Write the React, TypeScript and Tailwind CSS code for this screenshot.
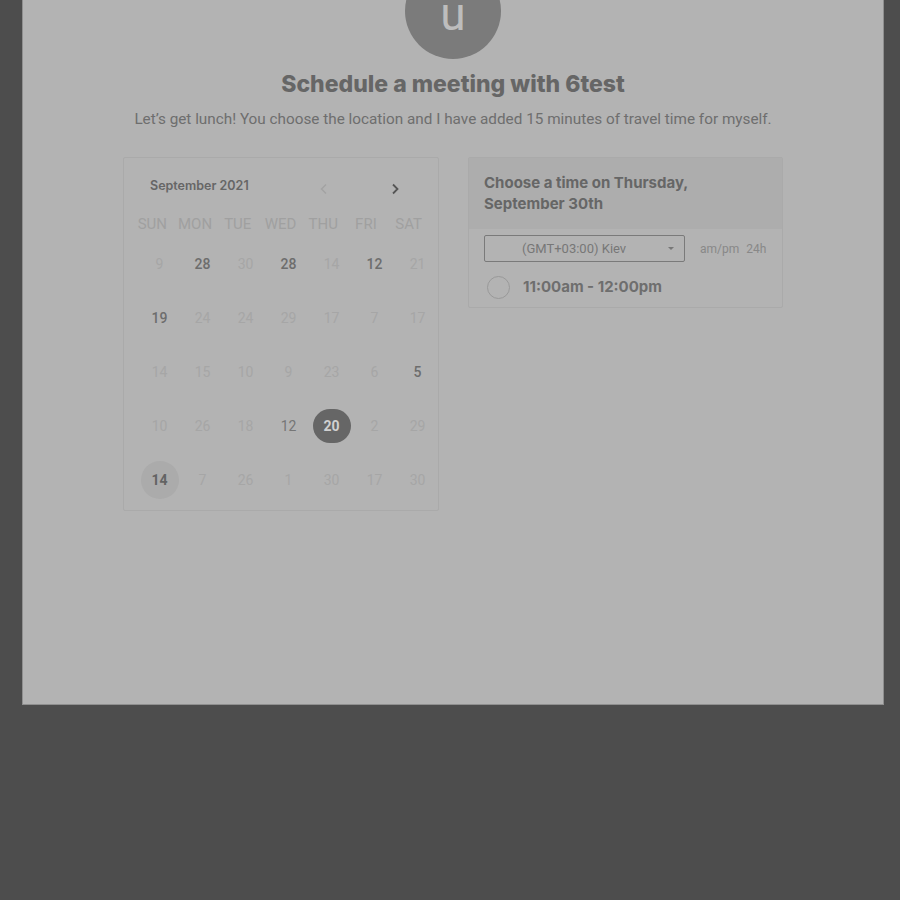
import React from "react";

type Day = { n: number; kind: "light" | "dark" | "mid" | "selected" | "today" };

const rows: Day[][] = [
  [
    { n: 9, kind: "light" },
    { n: 28, kind: "dark" },
    { n: 30, kind: "light" },
    { n: 28, kind: "dark" },
    { n: 14, kind: "light" },
    { n: 12, kind: "dark" },
    { n: 21, kind: "light" },
  ],
  [
    { n: 19, kind: "dark" },
    { n: 24, kind: "light" },
    { n: 24, kind: "light" },
    { n: 29, kind: "light" },
    { n: 17, kind: "light" },
    { n: 7, kind: "light" },
    { n: 17, kind: "light" },
  ],
  [
    { n: 14, kind: "light" },
    { n: 15, kind: "light" },
    { n: 10, kind: "light" },
    { n: 9, kind: "light" },
    { n: 23, kind: "light" },
    { n: 6, kind: "light" },
    { n: 5, kind: "dark" },
  ],
  [
    { n: 10, kind: "light" },
    { n: 26, kind: "light" },
    { n: 18, kind: "light" },
    { n: 12, kind: "mid" },
    { n: 20, kind: "selected" },
    { n: 2, kind: "light" },
    { n: 29, kind: "light" },
  ],
  [
    { n: 14, kind: "today" },
    { n: 7, kind: "light" },
    { n: 26, kind: "light" },
    { n: 1, kind: "light" },
    { n: 30, kind: "light" },
    { n: 17, kind: "light" },
    { n: 30, kind: "light" },
  ],
];

const week = ["SUN", "MON", "TUE", "WED", "THU", "FRI", "SAT"];

function DayCell({ d }: { d: Day }) {
  let inner = "text-[#a6a6a6]";
  if (d.kind === "dark") inner = "text-[#6d6d6d] font-medium";
  if (d.kind === "mid") inner = "text-[#767676]";
  if (d.kind === "selected")
    inner = "bg-[#666666] text-[#d0d0d0] font-bold rounded-full w-[38px] h-[34px]";
  if (d.kind === "today")
    inner = "bg-[#ababab] text-[#636363] font-bold rounded-full w-[38px] h-[38px]";
  return (
    <div className="h-[54px] flex items-center justify-center">
      <div className={`flex items-center justify-center text-[14px] ${inner}`}>{d.n}</div>
    </div>
  );
}

export default function App() {
  return (
    <div
      className="w-[900px] h-[900px] bg-[#4d4d4d] overflow-hidden"
      style={{ fontFamily: "Roboto, 'Liberation Sans', sans-serif" }}
    >
      <div className="ml-[22px] w-[862px] h-[705px] bg-[#b3b3b3] border-l border-r border-b border-[#8f8f8f] relative">
        <div className="absolute left-[382px] top-[-37px] w-[96px] h-[96px] rounded-full bg-[#7b7b7b] flex items-end justify-center pb-[31px]">
          <span className="text-[#bdbdbd] text-[46px] leading-[28px]" style={{ fontFamily: "Roboto, sans-serif" }}>u</span>
        </div>
        <div className="pt-[70px] flex flex-col items-center">
          <h1
            className="text-[23px] font-extrabold text-[#666666] leading-[28px]"
            style={{ fontFamily: "Inter, 'Liberation Sans', sans-serif" }}
          >
            Schedule a meeting with 6test
          </h1>
          <p className="mt-[12px] text-[15.3px] text-[#6e6e6e] leading-[18px]">
            Let’s get lunch! You choose the location and I have added 15 minutes of travel time for myself.
          </p>
        </div>
        <div className="mt-[29px] ml-[100px] flex items-start gap-[29px]">
          <div className="w-[316px] h-[354px] border border-[#aaaaaa] rounded-[2px] pl-[7px] pr-[5px]">
            <div className="flex items-center h-[54px] pt-[2px]">
              <span
                className="ml-[19px] text-[12.5px] font-semibold text-[#666666]"
                style={{ fontFamily: "Inter, 'Liberation Sans', sans-serif" }}
              >
                September 2021
              </span>
              <span className="ml-[70px] mt-[6px] text-[#a3a3a3]">
                <svg width="10" height="12" viewBox="0 0 10 12" fill="none">
                  <path d="M7 1.5 L2.5 6 L7 10.5" stroke="currentColor" strokeWidth="1.5" />
                </svg>
              </span>
              <span className="ml-[61px] mt-[6px] text-[#555555]">
                <svg width="10" height="12" viewBox="0 0 10 12" fill="none">
                  <path d="M3 1.5 L7.5 6 L3 10.5" stroke="currentColor" strokeWidth="1.8" />
                </svg>
              </span>
            </div>
            <div className="grid grid-cols-7 w-[299px] mt-[2px]">
              {week.map((w) => (
                <div key={w} className="text-center text-[15px] text-[#a0a0a0] leading-[20px] h-[20px]">
                  {w}
                </div>
              ))}
            </div>
            <div className="grid grid-cols-7 w-[301px] mt-[3px] ml-[7px]">
              {rows.flat().map((d, i) => (
                <DayCell key={i} d={d} />
              ))}
            </div>
          </div>
          <div className="w-[315px] border border-[#aaaaaa] rounded-[2px]">
            <div
              className="bg-[#adadad] px-[15px] pt-[14px] pb-[14px] h-[71px] text-[15px] font-bold text-[#666666] leading-[21px]"
              style={{ fontFamily: "Inter, 'Liberation Sans', sans-serif" }}
            >
              Choose a time on Thursday,
              <br />
              September 30th
            </div>
            <div className="px-[15px] pt-[6px] flex items-center">
              <div className="w-[201px] h-[27px] border border-[#7a7a7a] rounded-[2px] flex items-center relative">
                <span className="ml-[37px] text-[13px] text-[#777777]">(GMT+03:00) Kiev</span>
                <span className="absolute right-[10px] top-[11px] w-0 h-0 border-l-[3px] border-r-[3px] border-t-[3px] border-l-transparent border-r-transparent border-t-[#777777]" />
              </div>
              <span className="ml-[15px] text-[12px] text-[#888888]">am/pm</span>
              <span className="ml-[7px] text-[12px] text-[#888888]">24h</span>
            </div>
            <div className="flex items-center px-[18px] pt-[14px] pb-[8px]">
              <div className="w-[23px] h-[23px] rounded-full border-[1.5px] border-[#999999]" />
              <span
                className="ml-[13px] text-[15px] font-bold text-[#6e6e6e]"
                style={{ fontFamily: "Inter, 'Liberation Sans', sans-serif" }}
              >
                11:00am - 12:00pm
              </span>
            </div>
          </div>
        </div>
      </div>
    </div>
  );
}
